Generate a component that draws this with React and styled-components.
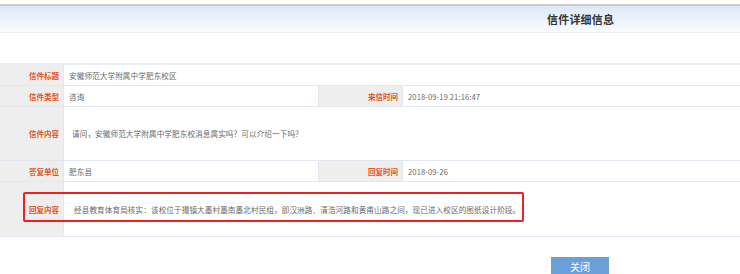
import React from 'react';
import styled, { createGlobalStyle } from 'styled-components';

const Global = createGlobalStyle`
  html, body {
    margin: 0;
    padding: 0;
    background: #fff;
    overflow: hidden;
  }
  body {
    font-family: "Noto Sans CJK SC", "Microsoft YaHei", sans-serif;
  }
`;

const Page = styled.div`
  width: 740px;
  padding-top: 4px;
`;

const TopRule = styled.div`
  height: 2px;
  background: #cbcbcb;
`;

const Header = styled.div`
  height: 26px;
  background: linear-gradient(to bottom, #dce8f6 0%, #eef4fb 55%, #fafcfe 100%);
  border-bottom: 1px solid #edf2f9;
  display: flex;
  align-items: center;
  padding-left: 547px;
`;

const Title = styled.h1`
  margin: 0;
  font-size: 11px;
  font-weight: bold;
  color: #333;
  letter-spacing: 0.2px;
`;

const Spacer = styled.div`
  height: 30px;
  border-bottom: 2px solid #eceef5;
`;

const Row = styled.div`
  display: grid;
  grid-template-columns: ${p => (p.$split ? '64px 255px 84px 1fr' : '64px 1fr')};
  height: ${p => p.$h}px;
  border-bottom: 1px solid #e2e7f1;
  position: relative;
`;

const Label = styled.div`
  background: #eeeeee;
  border-right: 1px solid #e2e7f1;
  color: #e2561f;
  font-size: 7.5px;
  font-weight: bold;
  display: flex;
  align-items: center;
  justify-content: flex-end;
  padding-right: 4px;
`;

const Value = styled.div`
  color: #6a6a6a;
  font-size: 7.6px;
  letter-spacing: 0.1px;
  display: flex;
  align-items: center;
  padding-left: ${p => p.$indent || 5}px;
  border-right: ${p => (p.$edge ? '1px solid #e2e7f1' : 'none')};
  white-space: nowrap;
`;

const Mark = styled.div`
  position: absolute;
  left: 23px;
  top: 10px;
  width: 497px;
  height: 26px;
  border: 2px solid #ee2020;
  border-radius: 2px;
  pointer-events: none;
`;

const Footer = styled.div`
  padding: 15px 0 0 551px;
`;

const CloseButton = styled.button`
  width: 58px;
  height: 20px;
  border: none;
  background: #6a9fd9;
  color: #fff;
  font-family: inherit;
  font-size: 10px;
  padding: 0;
  cursor: pointer;
`;

export default function App() {
  return (
    <Page>
      <Global />
      <TopRule />
      <Header>
        <Title>信件详细信息</Title>
      </Header>
      <Spacer />
      <Row $h={20}>
        <Label>信件标题</Label>
        <Value>安徽师范大学附属中学肥东校区</Value>
      </Row>
      <Row $h={20} $split>
        <Label>信件类型</Label>
        <Value $edge>咨询</Value>
        <Label>来信时间</Label>
        <Value>2018-09-19 21:16:47</Value>
      </Row>
      <Row $h={53}>
        <Label>信件内容</Label>
        <Value $indent={8}>请问，安徽师范大学附属中学肥东校消息属实吗？可以介绍一下吗？</Value>
      </Row>
      <Row $h={20} $split>
        <Label>答复单位</Label>
        <Value $edge>肥东县</Value>
        <Label>回复时间</Label>
        <Value>2018-09-26</Value>
      </Row>
      <Row $h={54}>
        <Label>回复内容</Label>
        <Value $indent={10}>经县教育体育局核实：该校位于撮镇大墨村墨南墨北村民组，即汉洲路、清浩河路和黄甫山路之间，现已进入校区的图纸设计阶段。</Value>
        <Mark />
      </Row>
      <Footer>
        <CloseButton>关闭</CloseButton>
      </Footer>
    </Page>
  );
}
